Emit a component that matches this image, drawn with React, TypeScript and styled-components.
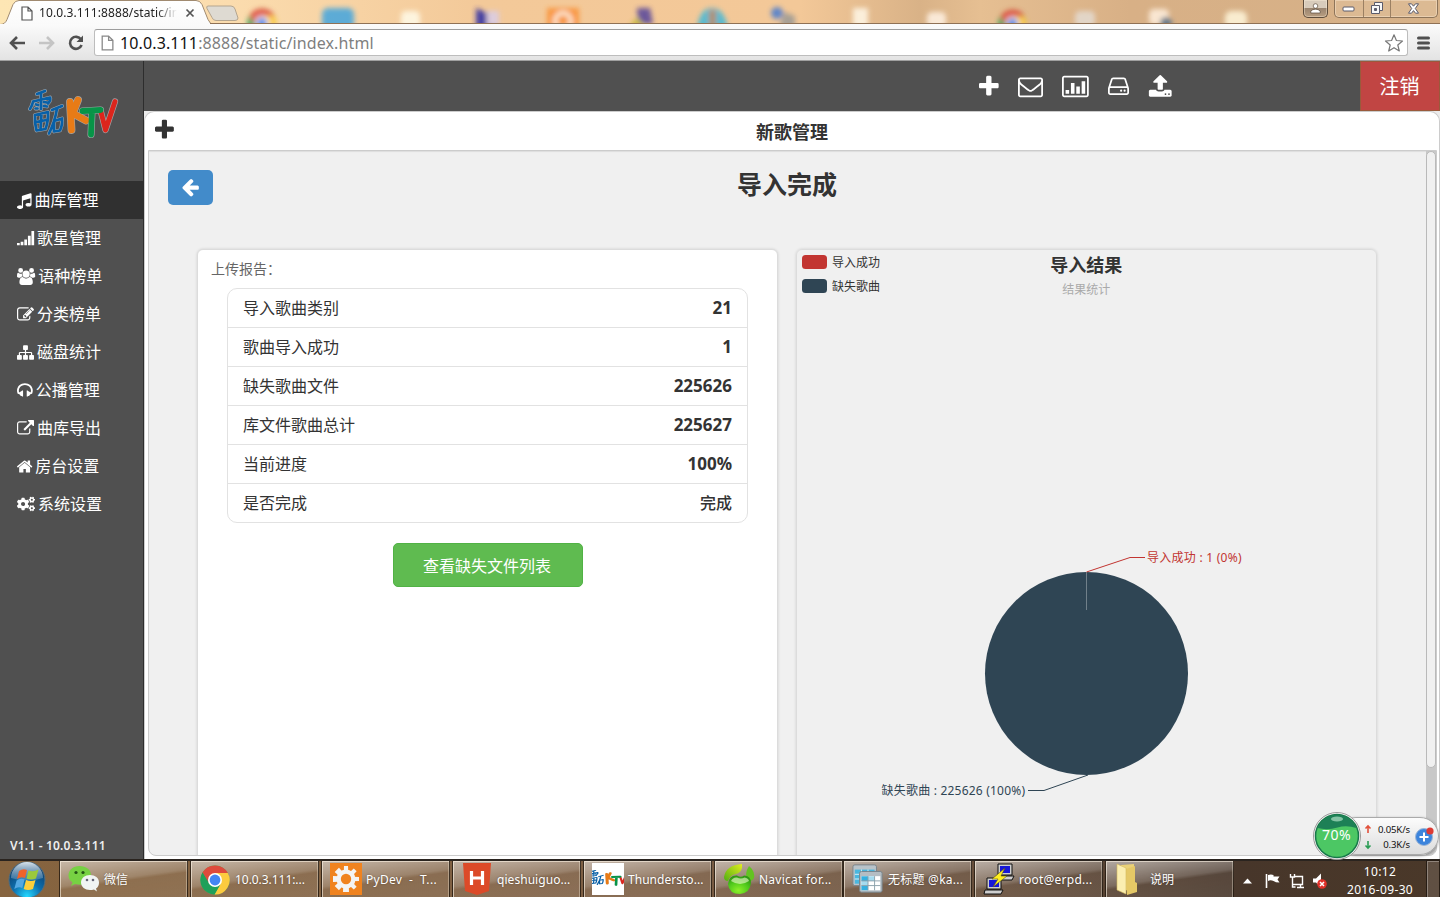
import React from 'react';
import styled, { createGlobalStyle, css } from 'styled-components';
import { FaCogs } from 'react-icons/fa';

const Global = createGlobalStyle`
  * { box-sizing: border-box; }
  html, body { margin: 0; padding: 0; }
  body {
    font-family: "Noto Sans", "Noto Sans CJK SC", sans-serif;
    font-size: 16px;
    color: #333;
    overflow: hidden;
  }
`;

const Screen = styled.div`
  width: 1440px;
  height: 897px;
  display: flex;
  flex-direction: column;
  overflow: hidden;
`;

/* ---------- browser chrome ---------- */

const TabStrip = styled.div`
  position: relative;
  height: 24px;
  flex: none;
  display: flex;
  justify-content: space-between;
  background: linear-gradient(90deg, #fde6b4 0, #fbdcae 230px, #f3c999 480px, #f3c898 800px, #d9b287 920px, #e6bf92 980px, #d8b086 1130px, #d6b188 1440px);
`;

const StripArt = styled.svg`
  position: absolute;
  inset: 0;
`;

const TabLabel = styled.div`
  position: relative;
  display: flex;
  align-items: center;
  padding: 2px 0 0 20px;
  height: 24px;
`;

const TabTitle = styled.span`
  width: 138px;
  margin-left: 6px;
  white-space: nowrap;
  font-size: 12px;
  line-height: 20px;
  letter-spacing: 0.1px;
  color: #222;
  -webkit-mask-image: linear-gradient(90deg, #000 118px, transparent 138px);
`;

const WindowButtons = styled.div`
  position: relative;
  display: flex;
  align-items: flex-start;
  gap: 6px;
  padding-right: 2px;
`;

const ButtonGroup = styled.div<{ $dark?: boolean }>`
  display: flex;
  height: 18px;
  border: 1px solid ${(p) => (p.$dark ? '#5d4c3c' : '#8d7459')};
  border-top: 0;
  border-radius: 0 0 5px 5px;
  background: ${(p) =>
    p.$dark ? 'linear-gradient(#d8cbbb 0 50%, #9b8570 50%, #b89d80)' : 'rgba(222, 190, 152, .7)'};
  box-shadow: inset 0 0 0 1px rgba(255, 240, 220, 0.4);
`;

const ChromeButton = styled.div<{ $w: number }>`
  width: ${(p) => p.$w}px;
  height: 17px;
  display: flex;
  align-items: center;
  justify-content: center;
  padding: 0 1px 1px 0;
  & + & { border-left: 1px solid #9b8063; }
`;

const Toolbar = styled.div`
  height: 37px;
  flex: none;
  display: flex;
  align-items: center;
  padding: 1px 9px 0 9px;
  background: linear-gradient(#fbfbfb, #e3e3e3);
  border-bottom: 1px solid #a0a0a0;
`;

const NavIcons = styled.svg`
  flex: none;
`;

const Address = styled.div`
  flex: 1;
  height: 27px;
  margin: 0 8px 0 9px;
  padding: 0 3px 0 5px;
  display: flex;
  align-items: center;
  background: #fff;
  border: 1px solid #bdbdbd;
  border-top-color: #9d9d9d;
  border-radius: 3px;
`;

const Url = styled.span`
  flex: 1;
  margin-left: 6px;
  font-size: 16px;
  line-height: 24px;
  letter-spacing: 0.12px;
  color: #7f7f7f;
  b { font-weight: 400; color: #111; }
`;

/* ---------- application ---------- */

const Page = styled.div`
  height: 798px;
  flex: none;
  display: flex;
`;

const Sidebar = styled.nav`
  width: 144px;
  flex: none;
  display: flex;
  flex-direction: column;
  background: #505050;
  border-right: 1px solid #2d2d2d;
  color: #fff;
`;

const LogoBox = styled.div`
  height: 120px;
  padding: 26px 0 0 27px;
`;

const NavItem = styled.div<{ $active?: boolean }>`
  height: 38px;
  display: flex;
  align-items: center;
  gap: 3px;
  padding-left: 17px;
  font-size: 16px;
  line-height: 24px;
  background: ${(p) => (p.$active ? '#303030' : 'transparent')};
`;

const Version = styled.div`
  margin-top: auto;
  padding: 0 0 3px 10px;
  font-size: 12px;
  font-weight: 600;
  line-height: 20px;
  letter-spacing: 0.18px;
  color: #eee;
`;

const Main = styled.main`
  flex: 1;
  display: flex;
  flex-direction: column;
  background: #ececec;
`;

const Header = styled.header`
  height: 50px;
  flex: none;
  display: flex;
  justify-content: flex-end;
  background: #505050;
  color: #fff;
`;

const HeaderIcons = styled.div`
  display: flex;
  align-items: center;
  padding-right: 188.5px;
`;

const HeaderSlot = styled.span<{ $gap: number }>`
  display: flex;
  margin-left: ${(p) => p.$gap}px;
`;

const Logout = styled.div`
  width: 80px;
  display: flex;
  align-items: center;
  justify-content: center;
  font-size: 20px;
  line-height: 30px;
  background: #c14543;
  border: 1px solid #9a5a3c;
  padding: 2px 1px 0 0;
`;

const Window = styled.section`
  flex: 1;
  min-height: 0;
  display: flex;
  flex-direction: column;
  padding: 0 2px 3px 3px;
  background: #fff;
  border: 1px solid #ccc;
  border-bottom: 0;
  border-radius: 10px 10px 0 0;
`;

const WindowBar = styled.div`
  height: 38px;
  flex: none;
  display: grid;
  grid-template-columns: 40px 1fr 40px;
  align-items: center;
  padding: 0 8px 2px 7px;
`;

const WindowTitle = styled.h2`
  margin: 3px 0 0;
  text-align: center;
  font-size: 18px;
  line-height: 24px;
  font-weight: 700;
`;

const Viewport = styled.div`
  height: 706px;
  display: flex;
  border: 1px solid #ccc;
  border-radius: 0 0 8px 8px;
  box-shadow: inset 0 1px 1px #ddd;
  background: #f0f0f0;
  overflow: hidden;
`;

const Scroller = styled.div`
  flex: 1;
  overflow: hidden;
  display: flex;
  flex-direction: column;
`;

const ScrollTrack = styled.div`
  width: 10px;
  background: #c8c8c8;
`;

const ScrollThumb = styled.div`
  height: 617px;
  background: #f0f0f0;
  border: 1px solid #b9b9b9;
  border-radius: 5px;
`;

const Heading = styled.div`
  height: 98px;
  flex: none;
  display: grid;
  grid-template-columns: 45px 1fr 45px;
  align-items: start;
  padding: 19px 20px 0 19px;
`;

const BackButton = styled.div`
  width: 45px;
  height: 35px;
  display: flex;
  align-items: center;
  justify-content: center;
  padding: 0 1px 1px 0;
  border-radius: 5px;
  background: #428bca;
  color: #fff;
`;

const PageTitle = styled.h1`
  margin: -4px 0 0;
  text-align: center;
  font-size: 25px;
  line-height: 36px;
  font-weight: 700;
`;

const Cards = styled.div`
  flex: none;
  display: flex;
  gap: 18px;
  padding-left: 48px;
`;

const cardBase = css`
  width: 581px;
  height: 640px;
  flex: none;
  border: 1px solid #dcdcdc;
  border-radius: 6px;
  box-shadow: 0 0 3px rgba(0, 0, 0, 0.14);
`;

const ReportCard = styled.div`
  ${cardBase}
  background: #fff;
  display: flex;
  flex-direction: column;
  align-items: center;
`;

const ChartCard = styled.div`
  ${cardBase}
`;

const ReportLabel = styled.div`
  align-self: stretch;
  height: 38px;
  padding: 7px 0 0 13px;
  font-size: 14px;
  line-height: 24px;
  color: #666;
`;

const Report = styled.div`
  width: 521px;
  margin-right: 1px;
  border: 1px solid #e2e2e2;
  border-radius: 10px;
`;

const ReportRow = styled.div`
  height: 39px;
  display: flex;
  align-items: center;
  justify-content: space-between;
  padding: 0 14.5px 0 15.5px;
  line-height: 24px;
  & + & { border-top: 1px solid #e2e2e2; }
  &:first-child { height: 38px; }
`;

const Value = styled.b<{ $cjk?: boolean }>`
  font-size: ${(p) => (p.$cjk ? 16 : 17)}px;
  font-weight: ${(p) => (p.$cjk ? 500 : 700)};
`;

const ListButton = styled.div`
  width: 190px;
  height: 44px;
  margin: 20px 0 0 1px;
  padding: 0 2px 1px 0;
  display: flex;
  align-items: center;
  justify-content: center;
  color: #fff;
  background: #5fbb50;
  border: 1px solid #51b245;
  border-radius: 5px;
`;

/* ---------- taskbar ---------- */

const Taskbar = styled.footer`
  height: 38px;
  flex: none;
  display: flex;
  border-top: 2px solid #2a241f;
  background: linear-gradient(90deg, #86643f 0, #7d5f45 45%, #644c39 70%, #47362a 86%, #4a3829 100%);
  color: #fff;
  font-size: 12px;
`;

const StartButton = styled.div`
  width: 59px;
  flex: none;
  padding-left: 8px;
`;

const Task = styled.div<{ $joined?: boolean }>`
  width: 129px;
  height: 38px;
  flex: none;
  margin-right: ${(p) => (p.$joined ? 0 : 2)}px;
  display: flex;
  align-items: center;
  gap: 4px;
  padding: 0 0 2px 8px;
  border: 1px solid rgba(30, 20, 10, 0.8);
  border-width: 0 1px;
  box-shadow: inset 1px 1px 0 rgba(255, 245, 230, 0.6), inset -1px 0 0 rgba(255, 245, 230, 0.35);
  background: linear-gradient(172deg, rgba(255, 255, 255, 0.55) 0, rgba(255, 255, 255, 0.22) 46%, rgba(255, 255, 255, 0.08) 52%, rgba(255, 255, 255, 0.1) 100%);
  white-space: pre;
  line-height: 18px;
  text-shadow: 0 0 2px rgba(0, 0, 0, 0.35);
  svg { flex: none; }
`;

const TaskText = styled.span<{ $ls?: number }>`
  padding-top: 2px;
  letter-spacing: ${(p) => p.$ls ?? 0.15}px;
`;

const Tray = styled.div`
  flex: 1;
  display: flex;
  align-items: center;
`;

const Clock = styled.div`
  width: 76px;
  margin-left: 6px;
  text-align: center;
  line-height: 18px;
  letter-spacing: 0.35px;
  padding-top: 3px;
`;

const ShowDesktop = styled.div`
  width: 14px;
  height: 38px;
  margin-left: auto;
  border: 1px solid #261c14;
  box-shadow: inset 1px 1px 0 rgba(255, 255, 255, 0.3);
  background: rgba(255, 255, 255, 0.12);
`;

/* ---------- network speed widget, floats above the page ---------- */

const SpeedWidget = styled.div`
  position: absolute;
  left: 1312px;
  top: 811px;
  width: 128px;
  height: 50px;
  display: flex;
  align-items: center;
`;

const SpeedPill = styled.div`
  width: 102px;
  height: 38px;
  margin-left: 25px;
  padding: 1px 0 0 26px;
  display: flex;
  align-items: center;
  border: 1px solid #aaa;
  border-radius: 19px;
  background: linear-gradient(#fcfcfc, #dcdcdc);
  box-shadow: 0 1px 3px rgba(0, 0, 0, 0.35);
  color: #111;
`;

const Speeds = styled.div`
  width: 38px;
  display: flex;
  flex-direction: column;
  text-align: right;
  line-height: 15px;
  font-size: 9.6px;
  letter-spacing: -0.15px;
`;

const Ball = styled.svg`
  position: absolute;
  left: 0;
  top: 0;
`;

/* ---------- icons ---------- */

const glyphs = {
  plus: {
    x: 192, w: 1408,
    d: 'M1600 736v192q0 40-28 68t-68 28h-416v416q0 40-28 68t-68 28h-192q-40 0-68-28t-28-68v-416h-416q-40 0-68-28t-28-68v-192q0-40 28-68t68-28h416v-416q0-40 28-68t68-28h192q40 0 68 28t28 68v416h416q40 0 68 28t28 68z',
  },
  envelope: {
    x: 0, w: 1792,
    d: 'M1664 1504v-768q-32 36-69 66-268 206-426 338-51 43-83 67t-86.500 48.500-102.500 24.500h-2q-48 0-102.500-24.500t-86.500-48.500-83-67q-158-132-426-338-37-30-69-66v768q0 13 9.500 22.500t22.500 9.500h1472q13 0 22.500-9.500t9.500-22.500zm0-1051v-24.500l-.5-13-3-12.500-5.500-9-9-7.500-14-2.500h-1472q-13 0-22.500 9.500t-9.500 22.500q0 168 147 284 193 152 401 317 6 5 35 29.500t46 37.500 44.500 31.500 50.500 27.500 43 9h2q20 0 43-9t50.500-27.500 44.500-31.500 46-37.500 35-29.500q208-165 401-317 54-43 100.500-115.500t46.500-131.500zm128-37v1088q0 66-47 113t-113 47h-1472q-66 0-113-47t-47-113v-1088q0-66 47-113t113-47h1472q66 0 113 47t47 113z',
  },
  chart: {
    x: 0, w: 1920,
    d: 'M256 1152h256v256h-256zM640 640h256v768h-256zM1024 896h256v512h-256zM1408 512h256v896h-256zM1760 128q66 0 113 47t47 113v1216q0 66-47 113t-113 47h-1600q-66 0-113-47t-47-113v-1216q0-66 47-113t113-47zM1792 1504v-1216q0-13-9.500-22.500t-22.500-9.500h-1600q-13 0-22.500 9.500t-9.500 22.500v1216q0 13 9.500 22.500t22.500 9.500h1600q13 0 22.500-9.500t9.500-22.500z',
  },
  hdd: {
    x: 128, w: 1536,
    d: 'M1168 1216a80 80 0 1 1-160 0 80 80 0 0 1 160 0zM1424 1216a80 80 0 1 1-160 0 80 80 0 0 1 160 0zM1536 1376v-320q0-13-9.500-22.500t-22.500-9.500h-1216q-13 0-22.500 9.500t-9.500 22.500v320q0 13 9.500 22.500t22.500 9.500h1216q13 0 22.500-9.500t9.500-22.500zM306 896h1180l-157-482q-4-13-16-21.500t-26-8.500h-782q-14 0-26 8.500t-16 21.500zM1664 1056v320q0 66-47 113t-113 47h-1216q-66 0-113-47t-47-113v-320q0-25 16-75l197-606q17-53 63-86t101-33h782q55 0 101 33t63 86l197 606q16 50 16 75z',
  },
  upload: {
    x: 0, w: 1728,
    d: 'M1344 1472q0-26-19-45t-45-19-45 19-19 45 19 45 45 19 45-19 19-45zm256 0q0-26-19-45t-45-19-45 19-19 45 19 45 45 19 45-19 19-45zm128-224v320q0 40-28 68t-68 28h-1472q-40 0-68-28t-28-68v-320q0-40 28-68t68-28h427q21 56 70.500 92t110.500 36h256q61 0 110.500-36t70.500-92h427q40 0 68 28t28 68zm-325-648q-17 40-59 40h-256v448q0 26-19 45t-45 19h-256q-26 0-45-19t-19-45v-448h-256q-42 0-59-40-17-39 14-69l448-448q18-19 45-19t45 19l448 448q31 30 14 69z',
  },
  back: {
    x: 64, w: 1600,
    d: 'M1664 896v128q0 53-32.500 90.500t-84.500 37.500h-704l293 294q38 36 38 90t-38 90l-75 76q-37 37-90 37-52 0-91-37l-651-652q-37-37-37-90 0-52 37-91l651-650q38-38 91-38 52 0 90 38l75 74q38 38 38 91t-38 91l-293 293h704q52 0 84.500 37.500t32.500 90.500z',
  },
  music: {
    x: 128, w: 1536,
    d: 'M1664 224v1120q0 50-34 89t-86 60.500-103.500 32-96.500 10.500-96.500-10.500-103.500-32-86-60.500-34-89 34-89 86-60.500 103.500-32 96.500-10.500q105 0 192 39v-537l-768 237v709q0 50-34 89t-86 60.500-103.500 32-96.500 10.500-96.500-10.500-103.500-32-86-60.500-34-89 34-89 86-60.500 103.500-32 96.500-10.500q105 0 192 39v-967q0-31 19-56.500t49-35.500l832-256q12-4 28-4 40 0 68 28t28 68z',
  },
  signal: {
    x: 0, w: 1792,
    d: 'M0 1376h288v224h-288zM384 1248h288v352h-288zM768 992h288v608h-288zM1152 608h288v992h-288zM1520 96h288v1504h-288z',
  },
  group: {
    x: 0, w: 1920,
    d: 'M593 896q-162 5-265 128h-134q-82 0-138-40.500t-56-118.500q0-353 124-353 6 0 43.500 21t97.500 42.500 119 21.500q67 0 133-23-5 37-5 66 0 139 81 256zM1664 1533q0 120-73 189.500t-194 69.500h-874q-121 0-194-69.500t-73-189.500q0-53 3.500-103.500t14-109 26.500-108.500 43-97.500 62-81 85.500-53.500 111.500-20q10 0 43 21.500t73 48 107 48 135 21.500 135-21.500 107-48 73-48 43-21.500q61 0 111.500 20t85.500 53.500 62 81 43 97.500 26.500 108.500 14 109 3.500 103.500zM640 256a256 256 0 1 1-512 0 256 256 0 0 1 512 0zM1344 640a384 384 0 1 1-768 0 384 384 0 0 1 768 0zM1920 865q0 78-56 118.500t-138 40.500h-134q-103-123-265-128 81-117 81-256 0-29-5-66 66 23 133 23 59 0 119-21.500t97.500-42.500 43.500-21q124 0 124 353zM1792 256a256 256 0 1 1-512 0 256 256 0 0 1 512 0z',
  },
  edit: {
    x: 0, w: 1784,
    d: 'M888 1184l116-116-152-152-116 116v56h96v96h56zm440-720q-16-16-33 1l-350 350q-17 17-1 33t33-1l350-350q17-17 1-33zm80 594v190q0 119-84.500 203.500t-203.500 84.500h-832q-119 0-203.500-84.500t-84.500-203.500v-832q0-119 84.500-203.500t203.500-84.500h832q63 0 117 25 15 7 18 23 3 17-9 29l-49 49q-14 14-32 8-23-6-45-6h-832q-66 0-113 47t-47 113v832q0 66 47 113t113 47h832q66 0 113-47t47-113v-126q0-13 9-22l64-64q15-15 35-7t20 29zm-96-738l288 288-672 672h-288v-288zm444 132l-92 92-288-288 92-92q28-28 68-28t68 28l152 152q28 28 28 68t-28 68z',
  },
  sitemap: {
    x: 0, w: 1792,
    d: 'M1792 1248v320q0 40-28 68t-68 28h-320q-40 0-68-28t-28-68v-320q0-40 28-68t68-28h96v-192h-512v192h96q40 0 68 28t28 68v320q0 40-28 68t-68 28h-320q-40 0-68-28t-28-68v-320q0-40 28-68t68-28h96v-192h-512v192h96q40 0 68 28t28 68v320q0 40-28 68t-68 28h-320q-40 0-68-28t-28-68v-320q0-40 28-68t68-28h96v-192q0-52 38-90t90-38h512v-192h-96q-40 0-68-28t-28-68v-320q0-40 28-68t68-28h320q40 0 68 28t28 68v320q0 40-28 68t-68 28h-96v192h512q52 0 90 38t38 90v192h96q40 0 68 28t28 68z',
  },
  headphones: {
    x: 64, w: 1664,
    d: 'M1728 886q0 166-60 314l-20 49-185 33q-22 83-90.500 136.500t-156.500 53.500v32q0 14-9 23t-23 9h-64q-14 0-23-9t-9-23v-576q0-14 9-23t23-9h64q14 0 23 9t9 23v32q71 0 130 35.500t93 95.500l68-12q29-95 29-193 0-148-88-279t-236.500-209-315.500-78-315.500 78-236.500 209-88 279q0 98 29 193l68 12q34-60 93-95.500t130-35.500v-32q0-14 9-23t23-9h64q14 0 23 9t9 23v576q0 14-9 23t-23 9h-64q-14 0-23-9t-9-23v-32q-88 0-156.500-53.500t-90.500-136.500l-185-33-20-49q-60-148-60-314 0-151 67-291t179-242.500 266-163.500 320-61 320 61 266 163.500 179 242.500 67 291z',
  },
  external: {
    x: 0, w: 1792,
    d: 'M1408 928v320q0 119-84.500 203.500t-203.500 84.500h-832q-119 0-203.500-84.500t-84.500-203.500v-832q0-119 84.500-203.500t203.500-84.500h704q14 0 23 9t9 23v64q0 14-9 23t-23 9h-704q-66 0-113 47t-47 113v832q0 66 47 113t113 47h832q66 0 113-47t47-113v-320q0-14 9-23t23-9h64q14 0 23 9t9 23zm384-864v512q0 26-19 45t-45 19-45-19l-176-176-652 652q-10 10-23 10t-23-10l-114-114q-10-10-10-23t10-23l652-652-176-176q-19-19-19-45t19-45 45-19h512q26 0 45 19t19 45z',
  },
  home: {
    x: 90, w: 1612,
    d: 'M1472 992v480q0 26-19 45t-45 19h-384v-384h-256v384h-384q-26 0-45-19t-19-45v-480q0-1 .5-3t.5-3l575-474 575 474q1 2 1 6zm223-69l-62 74q-8 9-21 11h-3q-13 0-21-7l-692-577-692 577q-12 8-24 7-13-2-21-11l-62-74q-8-10-7-23.500t11-21.500l719-599q32-26 76-26t76 26l244 204v-195q0-14 9-23t23-9h192q14 0 23 9t9 23v408l219 182q10 8 11 21.500t-7 23.500z',
  },
};

type GlyphName = keyof typeof glyphs;

const Glyph = ({ name, size }: { name: GlyphName; size: number }) => {
  const g = glyphs[name];
  return (
    <svg width={(g.w * size) / 1792} height={size} viewBox={`${g.x} 0 ${g.w} 1792`} fill="currentColor" overflow="visible">
      <path fillRule={name === 'hdd' || name === 'chart' ? 'evenodd' : 'nonzero'} d={g.d} />
    </svg>
  );
};

const navItems: { label: string; icon: GlyphName | 'cogs' }[] = [
  { label: '曲库管理', icon: 'music' },
  { label: '歌星管理', icon: 'signal' },
  { label: '语种榜单', icon: 'group' },
  { label: '分类榜单', icon: 'edit' },
  { label: '磁盘统计', icon: 'sitemap' },
  { label: '公播管理', icon: 'headphones' },
  { label: '曲库导出', icon: 'external' },
  { label: '房台设置', icon: 'home' },
  { label: '系统设置', icon: 'cogs' },
];

const headerIcons: { icon: GlyphName; gap: number; size: number }[] = [
  { icon: 'plus', gap: 0, size: 25 },
  { icon: 'envelope', gap: 19, size: 25 },
  { icon: 'chart', gap: 19, size: 25 },
  { icon: 'hdd', gap: 19, size: 24.5 },
  { icon: 'upload', gap: 19, size: 24.5 },
];

const rows = [
  ['导入歌曲类别', '21'],
  ['歌曲导入成功', '1'],
  ['缺失歌曲文件', '225626'],
  ['库文件歌曲总计', '225627'],
  ['当前进度', '100%'],
  ['是否完成', '完成'],
];

const brushMark =
  'M10 5l8-3M14 4v16M6 13q-1 4-3 7M6 12.500l17-4q1 3-2 6M9 15.500l2 .5M8.500 19.500l2 0M17 13l3 .5M17 17l3 .5M8 26l13-3q.5 9-2.500 17l-9 1.500q-2-8-1.500-15.500zM9 33l10.500-2M14.500 25l-1 15M25 21l10-4M30 19.500q-2 13-8 25M27 32l8-2.500q.5 7-2 12l-6 1z';
const kMark = 'M43 13l1.500 28M51 11L46 24M46 24.500l13 7';
const tMark = 'M55.500 22l18-1M65 22.500l-1 23';
const vMark = 'M74 23l4.500 18L88 12.500';

const KtvMark = () => (
  <g transform="translate(0 2)" fill="none" strokeLinecap="round" strokeLinejoin="round">
    <g stroke="#d9dfe4" opacity=".6">
      <path strokeWidth="3.800" d={brushMark} />
      <path strokeWidth="7.800" d={kMark} />
      <path strokeWidth="7" d={tMark} />
      <path strokeWidth="6.200" d={vMark} />
    </g>
    <path stroke="#0760a8" strokeWidth="2.700" d={brushMark} />
    <path stroke="#e87b16" strokeWidth="6.600" d={kMark} />
    <path stroke="#dc251c" strokeWidth="4.900" d={vMark} />
    <path stroke="#079447" strokeWidth="5.800" d={tMark} />
  </g>
);

const Logo = () => (
  <svg width="94" height="54" viewBox="0 0 94 54" overflow="visible">
    <KtvMark />
  </svg>
);

const ChromeLogo = ({ x = 0, y = 0, s = 30 }: { x?: number; y?: number; s?: number }) => (
  <svg x={x} y={y} width={s} height={s} viewBox="0 0 30 30">
    <circle cx="15" cy="15" r="14.500" fill="#4caf50" />
    <path d="M15 .5A14.500 14.500 0 0 1 27.800 8H15l-6.500 10L2.500 7.500A14.500 14.500 0 0 1 15 .5z" fill="#de4a3c" />
    <path d="M27.800 8A14.500 14.500 0 0 1 14.500 29.500L21 18 15 8z" fill="#fccb3f" />
    <path d="M2.500 7.500A14.500 14.500 0 0 0 14.500 29.500L20 20 9 18z" fill="#1fa05a" />
    <circle cx="15" cy="15" r="7" fill="#fff" />
    <circle cx="15" cy="15" r="5.400" fill="#4285f4" />
  </svg>
);

const TabStripDrawing = () => (
  <StripArt width="1440" height="24">
    <defs>
      <filter id="soft" x="-30%" y="-30%" width="160%" height="160%">
        <feGaussianBlur stdDeviation="2.400" />
      </filter>
      <linearGradient id="tab" x1="0" x2="0" y1="0" y2="1">
        <stop offset="0" stopColor="#fff" />
        <stop offset="1" stopColor="#fafafa" />
      </linearGradient>
    </defs>
    <g filter="url(#soft)" opacity=".85">
      <ChromeLogo x={247} y={8} s={30} />
      <rect x="322" y="8" width="32" height="22" rx="6" fill="#42a5df" />
      <rect x="401" y="11" width="19" height="20" rx="5" fill="#fffbe9" />
      <path d="M476 8l9 4 12 1v16h-21z" fill="#2c2aa4" />
      <rect x="487" y="11" width="12" height="15" fill="#d9cde8" />
      <path d="M547 8h32v22h-32z" fill="#fa9134" />
      <circle cx="563" cy="21" r="8" fill="none" stroke="#fff0df" strokeWidth="4" />
      <path d="M637 8h13l3 16h-15z" fill="#54449b" />
      <path d="M628 28l9-11 9 11z" fill="#c5ba36" />
      <path d="M697 28q3-20 15-20t16 20z" fill="#3fb8d8" />
      <path d="M709 10h7v18h-7z" fill="#a78568" />
      <circle cx="777" cy="13" r="6" fill="#467bd0" />
      <path d="M784 12l11 4v12h-16z" fill="#9b9a94" />
      <rect x="853" y="8" width="15" height="20" fill="#fff8e8" />
      <rect x="927" y="12" width="19" height="16" rx="5" fill="#fff2e4" />
      <ChromeLogo x={998} y={9} s={29} />
      <rect x="1075" y="11" width="20" height="16" rx="5" fill="#e4dbd2" />
      <rect x="1149" y="9" width="20" height="16" rx="5" fill="#fff0df" />
      <circle cx="1166" cy="23" r="6" fill="#53718c" />
      <rect x="1225" y="11" width="22" height="18" rx="6" fill="#fff7dc" />
    </g>
    <path d="M208 6h23q3 0 4 3l3 9q0 2.500-3 2.500h-19q-3 0-4-3l-5-9q-1-2.500 1-2.500z" fill="#dedad2" stroke="#b4a58f" />
    <path d="M0 24.500q5 0 7-5l6-15q2-4 6-4h177q4 0 6 4l6 15q2 5 6 5z" fill="url(#tab)" stroke="#a08a70" />
    <path d="M210 23.500h1230" stroke="#8f7155" />
  </StripArt>
);

const PageIcon = ({ size = 13, color = '#555' }: { size?: number; color?: string }) => (
  <svg width={size} height={size + 2} viewBox="0 0 13 15" fill="#fff" stroke={color} strokeWidth="1.200">
    <path d="M2 1h6l4 4v9H2zM8 1v4h4" />
  </svg>
);

const Chart = () => (
  <svg width="579" height="607" viewBox="797 250 579 607" fontSize="12">
    <rect x="802" y="255" width="25" height="14" rx="3.500" fill="#c23531" />
    <rect x="802" y="279" width="25" height="14" rx="3.500" fill="#2f4554" />
    <text x="832" y="267" fill="#333">导入成功</text>
    <text x="832" y="291" fill="#333">缺失歌曲</text>
    <text x="1086.300" y="271.500" fill="#333" fontSize="18" fontWeight="700" textAnchor="middle">导入结果</text>
    <text x="1086.300" y="294" fill="#aaa" textAnchor="middle">结果统计</text>
    <circle cx="1086.500" cy="673.500" r="101.500" fill="#2f4554" />
    <path d="M1086.500 572v38" stroke="#71808a" />
    <path d="M1086.500 572L1130 557.500h15" fill="none" stroke="#c23531" />
    <path d="M1088 775L1044 790.500h-16" fill="none" stroke="#2f4554" />
    <text x="1147" y="562" fill="#c23531" textLength="94.500">导入成功 : 1 (0%)</text>
    <text x="881.500" y="795" fill="#2f4554" textLength="143.500">缺失歌曲 : 225626 (100%)</text>
  </svg>
);

const StartOrb = () => (
  <svg width="38" height="38" viewBox="0 0 38 38">
    <defs>
      <radialGradient id="orb" cx=".5" cy=".95" r=".9">
        <stop offset="0" stopColor="#24d8ff" />
        <stop offset=".45" stopColor="#0d6fae" />
        <stop offset="1" stopColor="#0c3764" />
      </radialGradient>
      <linearGradient id="shine" x1="0" x2="0" y1="0" y2="1">
        <stop offset="0" stopColor="#e3edf4" stopOpacity=".95" />
        <stop offset="1" stopColor="#7fa6c4" stopOpacity=".35" />
      </linearGradient>
    </defs>
    <circle cx="19" cy="19" r="18" fill="url(#orb)" stroke="#4f6d80" />
    <path d="M3 17a16 16 0 0 1 32 0q-16 5-32 0z" fill="url(#shine)" />
    <path d="M11 10q4-3 8-1l-2 8q-4-2-8 1z" fill="#f0622a" />
    <path d="M20.500 9.500q5 2 10-1l-2.500 9q-5 2-9.500 0z" fill="#9bc93c" />
    <path d="M8.600 19.500q4-3 8-1l-2.300 8.500q-4-2-8 1z" fill="#53a8e2" />
    <path d="M18 19q5 2 9.500 0L25 28q-5 2-9.300 0z" fill="#fdcf3c" />
  </svg>
);

const WeChat = () => (
  <svg width="32" height="32" viewBox="0 0 32 32">
    <path d="M11.500 3C5 3 .5 7 .5 12.500c0 3 1.500 5 4 7L3 23l4-2q8 2 12-1 4-3 4-8C23 6.500 18 3 11.500 3z" fill="#77d143" />
    <circle cx="8" cy="9.500" r="1.600" fill="#245515" />
    <circle cx="15" cy="9.500" r="1.600" fill="#245515" />
    <path d="M22 12c-5 0-9 3-9 7.500s4 7.500 9 7.500q2 0 4-.6l3 2-1-3q3-2 3-6c0-4.500-4-7.400-9-7.400z" fill="#f1f4f3" />
    <circle cx="19" cy="17" r="1.300" fill="#667" />
    <circle cx="25" cy="17" r="1.300" fill="#667" />
  </svg>
);

const ChromeTask = () => (
  <svg width="32" height="32" viewBox="0 0 32 32">
    <ChromeLogo x={1} y={2} />
  </svg>
);

const Gear = () => (
  <svg width="32" height="32" viewBox="0 0 32 32">
    <rect width="32" height="32" fill="#f0831f" />
    <g fill="#f4f4f4">
      {[0, 45, 90, 135].map((a) => (
        <path key={a} d="M14 3h4l1 26h-6z" transform={`rotate(${a} 16 16)`} />
      ))}
      <circle cx="16" cy="16" r="9.500" />
    </g>
    <circle cx="16" cy="16" r="5.200" fill="#f0831f" />
  </svg>
);

const HBuilder = () => (
  <svg width="32" height="32" viewBox="0 0 32 32">
    <path d="M2 0h28l-2 28-12 4-12-4z" fill="#dc4a28" />
    <path d="M10.500 8v14M21.500 8v14M10.500 15h11" stroke="#fff" strokeWidth="3.200" fill="none" />
  </svg>
);

const KtvTile = () => (
  <svg width="32" height="32" viewBox="0 0 32 32">
    <rect width="32" height="32" fill="#fff" />
    <svg x="0" y="7" width="32" height="16" viewBox="10 3 72 48" preserveAspectRatio="none">
      <KtvMark />
    </svg>
  </svg>
);

const Navicat = () => (
  <svg width="32" height="32" viewBox="0 0 32 32">
    <defs>
      <radialGradient id="lime" cx=".45" cy=".8" r=".75">
        <stop offset="0" stopColor="#8df02a" />
        <stop offset=".6" stopColor="#4fc91c" />
        <stop offset="1" stopColor="#2f9a12" />
      </radialGradient>
      <linearGradient id="leaf" x1="0" x2="1" y1="1" y2="0">
        <stop offset="0" stopColor="#4fae12" />
        <stop offset="1" stopColor="#e3ee1e" />
      </linearGradient>
    </defs>
    <path d="M1 14Q3 2 19 1q1 8-6 10-6 1-8 7-4 0-4-4z" fill="url(#leaf)" />
    <path d="M26 3q6 5 5 12-2 4-5 3-6-6 0-15z" fill="#63c321" />
    <path d="M5 21q1-9 9-8.500 4 2.500 7 0 7 0 7 7.500-1 10-11 11Q6 31 5 21z" fill="url(#lime)" />
    <path d="M8 18q2-4 6-3.500 4 2 7.500 0 4 .5 4.500 3.500-9 6-18 0z" fill="#f0fbd2" opacity=".6" />
  </svg>
);

const TableApp = () => (
  <svg width="32" height="32" viewBox="0 0 34 32">
    <rect x="1" y="1" width="25" height="22" rx="2" fill="#b9c3c9" stroke="#77838b" />
    <rect x="3" y="6" width="21" height="15" fill="#49b7df" />
    <path d="M3 11h21M3 16h21M10 6v15M17 6v15" stroke="#e3f3fa" />
    <rect x="8" y="8" width="24" height="22" rx="2" fill="#b4bdc3" stroke="#77838b" />
    <rect x="10" y="13" width="20" height="15" fill="#fff" />
    <path d="M10 13h7v5h-7zM10 23h7v5h-7z" fill="#35b0e0" />
    <path d="M10 18h7v5h-7zM17 13h7v5h-7z" fill="#a5dcf0" />
    <path d="M10 18h20M10 23h20M17 13v15M24 13v15" stroke="#8ba0aa" />
  </svg>
);

const Putty = () => (
  <svg width="32" height="32" viewBox="0 0 32 32">
    <g stroke="#111" fill="#cfcfcf">
      <path d="M15 1h14v11H15zM13 13h18l-2 4H14z" />
      <path d="M4 15h14v11H4zM2 27h18l-2 4H1z" />
    </g>
    <path d="M17 3h10v7H17zM6 17h10v7H6z" fill="#1717d8" />
    <path d="M22 5L9 16h6l-5 8 14-11h-6z" fill="#ffee20" stroke="#55501a" strokeWidth=".6" />
  </svg>
);

const Folder = () => (
  <svg width="32" height="32" viewBox="0 0 32 32">
    <path d="M7 2l13-1v24l-10 3z" fill="#ead177" />
    <path d="M12 6l9-3v16l2 1v9l-10 3z" fill="#e5c866" />
    <path d="M3 1l9 4v26L3 27z" fill="#fbeeb0" stroke="#d5b95a" strokeWidth=".6" />
  </svg>
);

const tasks: { icon: React.ReactNode; text: string; joined?: boolean; ls?: number }[] = [
  { icon: <WeChat />, text: '微信', ls: 0 },
  { icon: <ChromeTask />, text: '10.0.3.111:...', ls: -0.05 },
  { icon: <Gear />, text: 'PyDev  -  T...', ls: 0.3 },
  { icon: <HBuilder />, text: 'qieshuiguo...', ls: 0.05 },
  { icon: <KtvTile />, text: 'Thundersto...', ls: 0.03 },
  { icon: <Navicat />, text: 'Navicat for...', joined: true, ls: 0.25 },
  { icon: <TableApp />, text: '无标题 @ka...', ls: 0.25 },
  { icon: <Putty />, text: 'root@erpd...', ls: 0.25 },
  { icon: <Folder />, text: '说明', ls: 0 },
];

const TrayIcons = () => (
  <svg width="100" height="36" viewBox="1234 861 100 36">
    <g transform="translate(-5 0)">
      <path d="M1246 883.500l4.500-5 4.500 5z" fill="#fff" />
      <path d="M1269.500 874v14" stroke="#fff" strokeWidth="1.600" />
      <path d="M1271 875q3-1 5.500 0v1.500h6l-2 3 2 3q-4 0-6-1.500-3-1.500-5.500 0z" fill="#fff" />
      <path d="M1297.500 876.500h8v8h-10v-4M1300 887.500h7M1303.500 885v2M1293.500 874v3h4v-3M1295.500 877v10h3" fill="none" stroke="#fff" strokeWidth="1.400" />
      <path d="M1316 878.500h3l5-5v14l-5-5h-3z" fill="#fff" />
      <circle cx="1325" cy="884" r="4.800" fill="#df3029" />
      <path d="M1323 882l4 4M1327 882l-4 4" stroke="#fff" strokeWidth="1.500" />
    </g>
  </svg>
);

const TabClose = styled.svg`
  margin-left: 8px;
`;

export default function App() {
  return (
    <Screen>
      <Global />
      <TabStrip>
        <TabStripDrawing />
        <TabLabel>
          <PageIcon />
          <TabTitle>10.0.3.111:8888/static/in</TabTitle>
          <TabClose width="10" height="10" viewBox="0 0 10 10">
            <path d="M1.500 1.500l7 7M8.500 1.500l-7 7" stroke="#555" strokeWidth="1.700" />
          </TabClose>
        </TabLabel>
        <WindowButtons>
          <ButtonGroup $dark>
            <ChromeButton $w={23}>
              <svg width="11" height="11" viewBox="0 0 11 11" fill="#fff" stroke="#5d4c3c" strokeWidth=".7">
                <circle cx="5.500" cy="3" r="2.300" />
                <path d="M.8 10V8q1.700-1.800 4.700-1.800T10.200 8v2z" />
              </svg>
            </ChromeButton>
          </ButtonGroup>
          <ButtonGroup>
            <ChromeButton $w={28}>
              <svg width="13" height="6" viewBox="0 0 13 6" overflow="visible"><rect x="1" y="2" width="11" height="4" rx="1" fill="#fff" stroke="#5a5a6a" /></svg>
            </ChromeButton>
            <ChromeButton $w={27}>
              <svg width="12" height="12" viewBox="0 0 12 12" fill="#f7f7f7" stroke="#5a5a6a">
                <path d="M3.500.5h8v8h-3v3h-8v-8h3z" />
                <path d="M3.500 6.500h2v2h-2z" fill="#5a5a6a" />
                <path d="M3.500 3.500h5v5" fill="none" />
              </svg>
            </ChromeButton>
            <ChromeButton $w={47}>
              <svg width="13" height="11" viewBox="0 0 13 11" fill="#fff" stroke="#5a5a6a">
                <path d="M1.500.8h3l2 2.400 2-2.400h3L8.300 5.500l3.200 4.700h-3l-2-2.600-2 2.600h-3l3.200-4.700z" />
              </svg>
            </ChromeButton>
          </ButtonGroup>
        </WindowButtons>
      </TabStrip>
      <Toolbar>
        <NavIcons width="76" height="20" viewBox="0 0 76 20" fill="none" strokeWidth="2.600">
          <path d="M16 10H3M8 4l-6 6 6 6" stroke="#505050" />
          <path d="M30 10h13M38 4l6 6-6 6" stroke="#c4c4c4" />
          <path d="M72 6.500a6 6 0 1 0 .6 5.500" stroke="#505050" />
          <path d="M74 2.500v6.500h-6.500z" fill="#505050" />
        </NavIcons>
        <Address>
          <PageIcon size={14} color="#888" />
          <Url><b>10.0.3.111</b>:8888/static/index.html</Url>
          <svg width="20" height="20" viewBox="0 0 20 20" fill="none" stroke="#777" strokeWidth="1.200" strokeLinejoin="round">
            <path d="M10 1.800l2.400 5.700 6.100.5-4.700 4 1.500 6-5.300-3.300L4.700 18l1.500-6-4.700-4 6.100-.5z" />
          </svg>
        </Address>
        <svg width="15" height="14" viewBox="0 0 15 14" stroke="#505050" strokeWidth="3" strokeLinecap="round">
          <path d="M2.500 2h10M2.500 7h10M2.500 12h10" />
        </svg>
      </Toolbar>
      <Page>
        <Sidebar>
          <LogoBox><Logo /></LogoBox>
          {navItems.map((item, i) => (
            <NavItem key={item.label} $active={i === 0}>
              {item.icon === 'cogs' ? <FaCogs size={18} /> : <Glyph name={item.icon} size={17} />}
              {item.label}
            </NavItem>
          ))}
          <Version>V1.1 - 10.0.3.111</Version>
        </Sidebar>
        <Main>
          <Header>
            <HeaderIcons>
              {headerIcons.map((h) => (
                <HeaderSlot key={h.icon} $gap={h.gap}><Glyph name={h.icon} size={h.size} /></HeaderSlot>
              ))}
            </HeaderIcons>
            <Logout>注销</Logout>
          </Header>
          <Window>
            <WindowBar>
              <Glyph name="plus" size={24} />
              <WindowTitle>新歌管理</WindowTitle>
            </WindowBar>
            <Viewport>
              <Scroller>
                <Heading>
                  <BackButton><Glyph name="back" size={20} /></BackButton>
                  <PageTitle>导入完成</PageTitle>
                </Heading>
                <Cards>
                  <ReportCard>
                    <ReportLabel>上传报告：</ReportLabel>
                    <Report>
                      {rows.map(([label, value]) => (
                        <ReportRow key={label}>
                          <span>{label}</span>
                          <Value $cjk={value === '完成'}>{value}</Value>
                        </ReportRow>
                      ))}
                    </Report>
                    <ListButton>查看缺失文件列表</ListButton>
                  </ReportCard>
                  <ChartCard><Chart /></ChartCard>
                </Cards>
              </Scroller>
              <ScrollTrack><ScrollThumb /></ScrollTrack>
            </Viewport>
          </Window>
        </Main>
      </Page>
      <Taskbar>
        <StartButton><StartOrb /></StartButton>
        {tasks.map((t) => (
          <Task key={t.text} $joined={t.joined}>
            {t.icon}
            <TaskText $ls={t.ls}>{t.text}</TaskText>
          </Task>
        ))}
        <Tray>
          <TrayIcons />
          <Clock>10:12<br />2016-09-30</Clock>
          <ShowDesktop />
        </Tray>
      </Taskbar>
      <SpeedWidget>
        <SpeedPill>
          <svg width="8" height="26" viewBox="0 0 8 26" fill="none" strokeWidth="1.600">
            <path d="M4 9V2M1.500 4.500L4 2l2.500 2.500" stroke="#e2513c" />
            <path d="M4 17v7M1.500 21.500L4 24l2.500-2.500" stroke="#2b9d55" />
          </svg>
          <Speeds><span>0.05K/s</span><span>0.3K/s</span></Speeds>
        </SpeedPill>
        <Ball width="128" height="50" viewBox="0 0 128 50">
          <circle cx="25" cy="25" r="23.500" fill="#f4f4f4" stroke="#999" />
          <circle cx="25" cy="25" r="21.500" fill="#4cc764" stroke="#17784a" strokeWidth="1.500" />
          <path d="M5.500 17a21 21 0 0 1 39 0q-10-3-19-.5-10 3-20 .5z" fill="#1d8056" />
          <ellipse cx="25" cy="8" rx="6" ry="2.500" fill="#9fd3b8" opacity=".8" />
          <text x="24.500" y="29" fill="#fff" fontSize="14" letterSpacing=".5" textAnchor="middle">70%</text>
          <circle cx="112" cy="26" r="8.500" fill="#3c84dc" stroke="#9db6d6" />
          <path d="M112 21.500v9M107.500 26h9" stroke="#fff" strokeWidth="2" />
          <circle cx="118" cy="20" r="3.600" fill="#dd3a34" />
        </Ball>
      </SpeedWidget>
    </Screen>
  );
}
